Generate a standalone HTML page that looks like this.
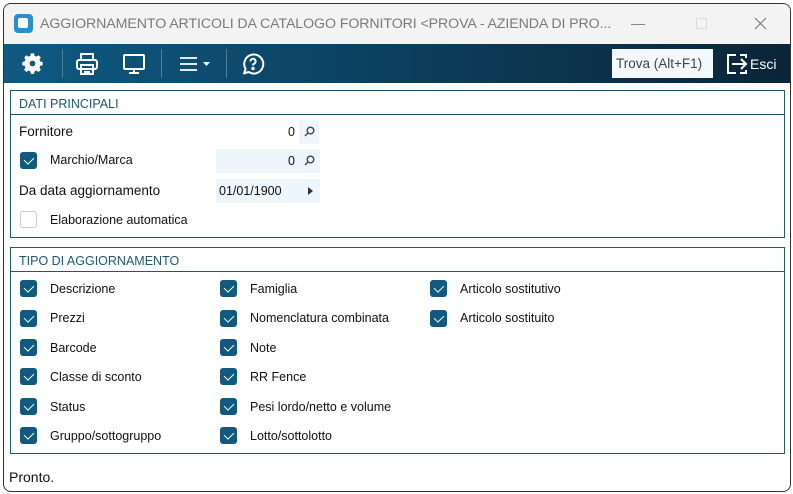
<!DOCTYPE html>
<html><head><meta charset="utf-8"><style>
*{margin:0;padding:0;box-sizing:border-box}
body{width:793px;height:494px;background:#fff;font-family:"Liberation Sans",sans-serif;position:relative;overflow:hidden}
.win{position:absolute;left:3px;top:3px;width:788px;height:489px;border:1px solid #333;border-radius:8px;overflow:hidden;background:#fff}
.title{position:absolute;left:0;top:0;width:100%;height:40px;background:#f3f3f3}
.title .t{position:absolute;left:36px;top:12px;font-size:14.2px;color:#7a7a7a;white-space:nowrap;letter-spacing:-0.1px}
.logo{position:absolute;left:10px;top:10px;width:19px;height:19px;background:#2a8fd0;border-radius:4px}
.logo:after{content:"";position:absolute;left:4px;top:4px;width:10px;height:10px;background:#fff;border-radius:2px}
.tb{position:absolute;left:0;top:40px;width:100%;height:39px;background:linear-gradient(90deg,#0f5a82,#0c3f5e 50%,#0b2438)}
.sep{position:absolute;top:5px;width:1px;height:29px;background:#4d7f9c}
.find{position:absolute;left:608px;top:5px;width:101px;height:29px;background:#f3f8fc;color:#444;font-size:13.5px;padding:7px 0 0 4px}
.esci{position:absolute;left:746px;top:12px;color:#fff;font-size:14px}
.box{position:absolute;left:6px;border:1px solid #1c5878;width:775px}
.hd{height:24px;border-bottom:1px solid #1c5878;color:#1c5878;font-size:12.5px;padding:6px 0 0 8px}
.lbl{position:absolute;font-size:13.5px;color:#111;white-space:nowrap}
.lbl.s{font-size:12.5px}
.cb{position:absolute;width:17px;height:17px;background:#0f5a7e;border-radius:3px}
.cb:after{content:"";position:absolute;left:5.5px;top:3px;width:5px;height:8px;border:solid #fff;border-width:0 1.8px 1.8px 0;transform:rotate(45deg)}
.cb.off{background:#fff;border:1px solid #ccc}.cb.off:after{display:none}
.fld{position:absolute;background:#eef5fb;font-size:12.5px;color:#111;height:24px}
.mg{position:absolute}
</style></head><body><div class="win">
<div class="title"><div class="logo"></div><div class="t">AGGIORNAMENTO ARTICOLI DA CATALOGO FORNITORI &lt;PROVA - AZIENDA DI PRO...</div>
<div style="position:absolute;left:627px;top:20px;width:14px;height:1px;background:#888"></div>
<div style="position:absolute;left:692px;top:14px;width:11px;height:11px;border:1px solid #ddd"></div>
<svg style="position:absolute;left:750px;top:13px" width="13" height="13" viewBox="0 0 13 13" stroke="#777" stroke-width="1.1"><path d="M1 1l11 11M12 1L1 12"/></svg></div>
<div class="tb">
<svg style="position:absolute;left:18px;top:9px" width="21" height="21" viewBox="0 0 24 24"><path fill="#fff" d="M10 1h4l.6 3 2.4 1 2.6-1.7 2.8 2.8L20.7 8.7l1 2.4 3 .6v4l-3 .6-1 2.4 1.7 2.6-2.8 2.8-2.6-1.7-2.4 1-.6 3h-4l-.6-3-2.4-1-2.6 1.7-2.8-2.8 1.7-2.6-1-2.4-3-.6v-4l3-.6 1-2.4L1.7 6.1 4.5 3.3 7 5l2.4-1z" transform="scale(.92) translate(1 -.5)"/><circle cx="12" cy="12" r="3.3" fill="#105a82"/></svg>
<div class="sep" style="left:58px"></div>
<svg style="position:absolute;left:71px;top:8px" width="24" height="24" viewBox="0 0 24 24" fill="none" stroke="#fff" stroke-width="2"><rect x="6" y="2" width="12" height="6"/><rect x="2" y="8" width="20" height="9" rx="2"/><rect x="6" y="13" width="12" height="9"/><path d="M9 17h6M9 20h6"/></svg>
<svg style="position:absolute;left:118px;top:8px" width="24" height="24" viewBox="0 0 24 24" fill="none" stroke="#fff" stroke-width="2"><rect x="2" y="3" width="20" height="14" rx="1"/><path d="M12 17v4M7 21h10"/></svg>
<div class="sep" style="left:157px"></div>
<svg style="position:absolute;left:174px;top:10px" width="36" height="20" viewBox="0 0 36 20" fill="none" stroke="#fff" stroke-width="1.8"><path d="M2 4h17M2 10h17M2 16h17"/><path d="M25 8h7l-3.5 4z" fill="#fff" stroke="none"/></svg>
<div class="sep" style="left:222px"></div>
<svg style="position:absolute;left:237px;top:8px" width="24" height="24" viewBox="0 0 24 24" fill="none" stroke="#fff" stroke-width="2"><path d="M3 21.5l1.6-4.6A9.5 9.5 0 1 1 7.6 20z" stroke-linejoin="round"/><path d="M9.4 9.4a2.6 2.6 0 1 1 3.6 2.4c-.7.4-1 .9-1 1.7"/><circle cx="12" cy="16.5" r=".7" fill="#fff"/></svg>
<div class="find">Trova (Alt+F1)</div>
<svg style="position:absolute;left:722px;top:9px" width="22" height="22" viewBox="0 0 22 22" fill="none" stroke="#fff" stroke-width="2"><path d="M10 2H2v18h8"/><path d="M6 11h14M15 6l5 5-5 5"/><path d="M14 2h6v3M14 20h6v-3"/></svg>
<div class="esci">Esci</div>
</div>
<div class="box" style="top:86px;height:148px"><div class="hd">DATI PRINCIPALI</div></div>
<div class="lbl" style="left:15px;top:120px">Fornitore</div>
<div class="fld" style="left:295px;top:116px;width:20px"></div>
<div class="lbl s" style="left:284px;top:121px">0</div>
<svg class="mg" style="left:300px;top:122px" width="11" height="11" viewBox="0 0 11 11" fill="none" stroke="#444" stroke-width="1.4"><circle cx="6.5" cy="4.5" r="3.3"/><path d="M4.2 6.8L1 10"/></svg>
<div class="cb" style="left:16px;top:148px"></div><div class="lbl s" style="left:46px;top:149px">Marchio/Marca</div>
<div class="fld" style="left:212px;top:145px;width:104px"></div>
<div class="lbl s" style="left:284px;top:150px">0</div>
<svg class="mg" style="left:300px;top:151px" width="11" height="11" viewBox="0 0 11 11" fill="none" stroke="#444" stroke-width="1.4"><circle cx="6.5" cy="4.5" r="3.3"/><path d="M4.2 6.8L1 10"/></svg>
<div class="lbl" style="left:15px;top:179px">Da data aggiornamento</div>
<div class="fld" style="left:212px;top:175px;width:104px"></div>
<div class="lbl s" style="left:215px;top:180px">01/01/1900</div>
<svg class="mg" style="left:304px;top:183px" width="5" height="8" viewBox="0 0 5 8"><path d="M0 0l5 4-5 4z" fill="#333"/></svg>
<div class="cb off" style="left:16px;top:207px"></div><div class="lbl s" style="left:46px;top:209px">Elaborazione automatica</div>
<div class="box" style="top:243px;height:207px"><div class="hd">TIPO DI AGGIORNAMENTO</div></div>
<div class="cb" style="left:16px;top:276px"></div><div class="lbl s" style="left:46px;top:278px">Descrizione</div>
<div class="cb" style="left:16px;top:306px"></div><div class="lbl s" style="left:46px;top:307px">Prezzi</div>
<div class="cb" style="left:16px;top:335px"></div><div class="lbl s" style="left:46px;top:337px">Barcode</div>
<div class="cb" style="left:16px;top:364px"></div><div class="lbl s" style="left:46px;top:366px">Classe di sconto</div>
<div class="cb" style="left:16px;top:394px"></div><div class="lbl s" style="left:46px;top:396px">Status</div>
<div class="cb" style="left:16px;top:423px"></div><div class="lbl s" style="left:46px;top:425px">Gruppo/sottogruppo</div>
<div class="cb" style="left:216px;top:276px"></div><div class="lbl s" style="left:246px;top:278px">Famiglia</div>
<div class="cb" style="left:216px;top:306px"></div><div class="lbl s" style="left:246px;top:307px">Nomenclatura combinata</div>
<div class="cb" style="left:216px;top:335px"></div><div class="lbl s" style="left:246px;top:337px">Note</div>
<div class="cb" style="left:216px;top:364px"></div><div class="lbl s" style="left:246px;top:366px">RR Fence</div>
<div class="cb" style="left:216px;top:394px"></div><div class="lbl s" style="left:246px;top:396px">Pesi lordo/netto e volume</div>
<div class="cb" style="left:216px;top:423px"></div><div class="lbl s" style="left:246px;top:425px">Lotto/sottolotto</div>
<div class="cb" style="left:426px;top:276px"></div><div class="lbl s" style="left:456px;top:278px">Articolo sostitutivo</div>
<div class="cb" style="left:426px;top:306px"></div><div class="lbl s" style="left:456px;top:307px">Articolo sostituito</div>
<div class="lbl" style="left:5px;top:465px;font-size:14px">Pronto.</div>
</div></body></html>
